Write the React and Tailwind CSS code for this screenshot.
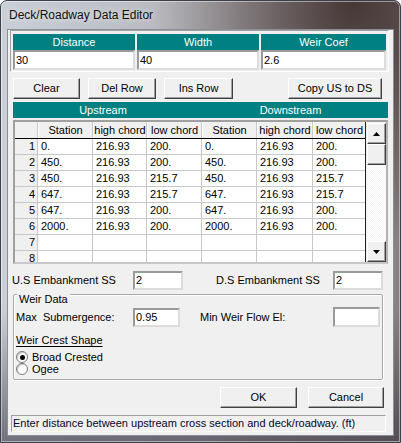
import React from 'react';

const rows = [
  ['0.', '216.93', '200.', '0.', '216.93', '200.'],
  ['450.', '216.93', '200.', '450.', '216.93', '200.'],
  ['450.', '216.93', '215.7', '450.', '216.93', '215.7'],
  ['647.', '216.93', '215.7', '647.', '216.93', '215.7'],
  ['647.', '216.93', '200.', '647.', '216.93', '200.'],
  ['2000.', '216.93', '200.', '2000.', '216.93', '200.'],
  ['', '', '', '', '', ''],
  ['', '', '', '', '', ''],
];

const colW = ['w-[55px]', 'w-[54px]', 'w-[55px]', 'w-[55px]', 'w-[56px]', 'w-[52px]'];
const headers = ['Station', 'high chord', 'low chord', 'Station', 'high chord', 'low chord'];

function Btn({ className, children }) {
  return (
    <div
      className={`flex h-[21px] items-center justify-center border border-t-white border-l-white border-r-[#404040] border-b-[#404040] bg-[#f0f0f0] shadow-[inset_-1px_-1px_0_#a0a0a0] ${className}`}
    >
      {children}
    </div>
  );
}

function Field({ className, value }) {
  return (
    <div
      className={`flex items-center border-2 border-t-[#9a9a9a] border-l-[#9a9a9a] border-r-[#dcdcdc] border-b-[#dcdcdc] bg-white pl-[1px] ${className}`}
    >
      {value}
    </div>
  );
}

function Arrow({ down }) {
  return (
    <svg width="7" height="4" viewBox="0 0 7 4">
      {down ? <polygon points="0,0 7,0 3.5,4" fill="#000" /> : <polygon points="0,4 7,4 3.5,0" fill="#000" />}
    </svg>
  );
}

function Radio({ checked, label }) {
  return (
    <div className="flex h-[12px] items-center">
      <span className="ml-[2px] flex h-[12px] w-[12px] items-center justify-center rounded-full border border-[#7a7a7a] bg-white shadow-[inset_1px_1px_0_#c8c8c8]">
        {checked && <span className="h-[5px] w-[5px] rounded-full bg-black" />}
      </span>
      <span className="ml-[4px]">{label}</span>
    </div>
  );
}

export default function App() {
  return (
    <div className="h-[443px] w-[401px] overflow-hidden rounded-t-[7px] border border-[#3e4049] bg-[radial-gradient(ellipse_at_88%_0%,rgba(45,28,26,0.75),transparent_40%),linear-gradient(180deg,transparent_70%,rgba(40,36,48,0.55)),linear-gradient(90deg,#c9cfd8,#b4b4b9_50%,#8a7f80)] font-['Liberation_Sans',Arial,sans-serif] text-[11px] leading-[13px] text-black shadow-[inset_0_0_0_1px_rgba(255,255,255,0.45)]">
      <div className="flex h-[29px] items-center pl-[8px] text-[12px] text-[#101010] [text-shadow:0_0_6px_rgba(255,255,255,0.9)]">
        Deck/Roadway Data Editor
      </div>

      <div className="ml-[7px] flex h-[405px] w-[385px] flex-col bg-[#f0f0f0] shadow-[0_0_0_1px_#8a8e98]">
        {/* distance / width / weir coef */}
        <div className="ml-[2px] h-[42px] w-[379px] border-t border-l border-t-[#a0a0a0] border-l-[#a0a0a0] border-r border-b border-r-white border-b-white pl-[2px] pt-[3px]">
          <div className="grid grid-cols-[122px_122px_125px] gap-x-[2px]">
            {['Distance', 'Width', 'Weir Coef'].map((h) => (
              <div key={h} className="flex h-[16px] items-center justify-center bg-[#008080] text-white">
                {h}
              </div>
            ))}
            <Field className="h-[20px]" value="30" />
            <Field className="h-[20px]" value="40" />
            <Field className="h-[20px]" value="2.6" />
          </div>
        </div>

        <div className="ml-[5px] mt-[6px] flex">
          <Btn className="w-[67px]">Clear</Btn>
          <Btn className="ml-[8px] w-[68px]">Del Row</Btn>
          <Btn className="ml-[8px] w-[69px]">Ins Row</Btn>
          <Btn className="ml-[55px] w-[94px]">Copy US to DS</Btn>
        </div>

        <div className="ml-[5px] mt-[3px] flex h-[16px] w-[375px] bg-[#008080] text-white">
          <div className="flex w-[180px] items-center justify-center">Upstream</div>
          <div className="flex w-[195px] items-center justify-center">Downstream</div>
        </div>

        {/* data grid */}
        <div className="ml-[5px] mt-[2px] flex h-[144px] w-[375px] border-2 border-t-[#a0a0a0] border-l-[#a0a0a0] border-r-[#b4b4b4] border-b-[#c8c8c8] bg-[#f0f0f0]">
          <div className="flex w-[351px] flex-col border-r border-r-[#202020]">
            <div className="flex h-[17px] border-b border-b-black bg-[#f0f0f0]">
              <div className="h-full w-[23px] border-r border-r-[#c8c8c8]" />
              {headers.map((h, i) => (
                <div
                  key={i}
                  className={`flex h-full items-center justify-center overflow-hidden whitespace-nowrap border-l border-l-white border-r border-r-[#c8c8c8] ${colW[i]} ${i === 5 ? 'border-r-0' : ''}`}
                >
                  {h}
                </div>
              ))}
            </div>
            <div className="h-[123px] overflow-hidden">
              {rows.map((r, ri) => (
                <div key={ri} className="flex h-[16px]">
                  <div className="flex h-full w-[23px] items-center justify-end border-r border-b border-[#c8c8c8] bg-[#f0f0f0] pr-[2px]">
                    {ri + 1}
                  </div>
                  {r.map((v, ci) => (
                    <div
                      key={ci}
                      className={`flex h-full items-center border-b border-b-[#c8c8c8] bg-white pl-[3px] ${colW[ci]} ${ci === 5 ? '' : 'border-r border-r-[#c8c8c8]'}`}
                    >
                      {v}
                    </div>
                  ))}
                </div>
              ))}
            </div>
          </div>
          <div className="flex w-[20px] flex-col pl-[1px] pt-[1px]">
            <Btn className="h-[16px] w-[19px]">
              <Arrow />
            </Btn>
            <Btn className="h-[17px] w-[19px]" />
            <div className="flex-1 bg-[repeating-conic-gradient(#f4f4f4_0_25%,#ffffff_0_50%)] bg-[length:2px_2px]" />
            <Btn className="h-[16px] w-[19px]">
              <Arrow down />
            </Btn>
          </div>
        </div>

        {/* embankment */}
        <div className="mt-[7px] flex h-[19px] items-center">
          <span className="ml-[4px] w-[121px]">U.S Embankment SS</span>
          <Field className="h-[19px] w-[50px]" value="2" />
          <span className="ml-[33px] w-[117px]">D.S Embankment SS</span>
          <Field className="h-[19px] w-[50px]" value="2" />
        </div>

        {/* weir data */}
        <div className="relative ml-[5px] mt-[4px] h-[86px] w-[370px] rounded-[2px] border border-[#a8a8a8] pt-[12px] shadow-[inset_1px_1px_0_#ffffff,1px_1px_0_#ffffff]">
          <span className="absolute left-[3px] top-[-2px] bg-[#f0f0f0] px-[2px]">Weir Data</span>
          <div className="flex h-[20px] items-center">
            <span className="ml-[2px] w-[117px] whitespace-pre">Max  Submergence:</span>
            <Field className="h-[19px] w-[47px]" value="0.95" />
            <span className="ml-[20px] w-[133px]">Min Weir Flow El:</span>
            <Field className="h-[20px] w-[47px]" value="" />
          </div>
          <div className="ml-[2px] mt-[7px] h-[13px] underline underline-offset-[2px]">Weir Crest Shape</div>
          <div className="mt-[4px]">
            <Radio checked label="Broad Crested" />
            <Radio label="Ogee" />
          </div>
        </div>

        <div className="mt-[7px] flex">
          <Btn className="ml-[212px] w-[77px]">OK</Btn>
          <Btn className="ml-[11px] w-[76px]">Cancel</Btn>
        </div>

        <div className="ml-[3px] mt-[7px] flex h-[17px] w-[375px] items-center border border-t-[#a0a0a0] border-l-[#a0a0a0] border-r-white border-b-white pl-[1px] text-[#06062a]">
          Enter distance between upstream cross section and deck/roadway. (ft)
        </div>
      </div>
    </div>
  );
}
